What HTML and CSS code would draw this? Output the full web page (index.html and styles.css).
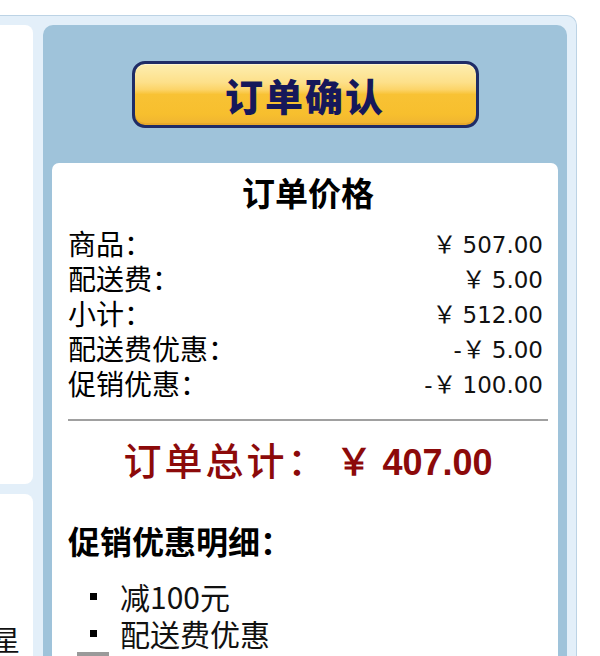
FILE: index.html
```html
<!DOCTYPE html>
<html lang="zh-CN">
<head>
<meta charset="utf-8">
<title>订单确认</title>
<link rel="stylesheet" href="styles.css">
</head>
<body>
<div class="frame">
  <div class="side">
    <div class="side-panel side-top"></div>
    <div class="side-panel side-bottom"><div class="side-char">星</div></div>
  </div>
  <div class="main">
    <button class="confirm" type="button">订单确认</button>
    <div class="card">
      <h2 class="card-title">订单价格</h2>
      <div class="rows">
        <div class="row"><span class="label">商品：</span><span class="price"><span class="yen">￥</span>507.00</span></div>
        <div class="row"><span class="label">配送费：</span><span class="price"><span class="yen">￥</span>5.00</span></div>
        <div class="row"><span class="label">小计：</span><span class="price"><span class="yen">￥</span>512.00</span></div>
        <div class="row"><span class="label">配送费优惠：</span><span class="price">-<span class="yen">￥</span>5.00</span></div>
        <div class="row"><span class="label">促销优惠：</span><span class="price">-<span class="yen">￥</span>100.00</span></div>
      </div>
      <div class="divider"></div>
      <div class="total"><span class="total-label">订单总计：</span><span class="total-num">￥ 407.00</span></div>
      <h3 class="promo-title">促销优惠明细：</h3>
      <ul class="promo-list">
        <li>减100元</li>
        <li>配送费优惠</li>
      </ul>
      <div class="bar"></div>
    </div>
  </div>
</div>
</body>
</html>
```

FILE: styles.css
```css
* { box-sizing: border-box; }
html, body { margin: 0; padding: 0; background: #fff; }
body {
  font-family: "Noto Sans CJK SC", "Noto Sans", sans-serif;
  color: #000;
  overflow: hidden;
  height: 656px;
}
.frame {
  margin-top: 15px;
  width: 577px;
  height: 720px;
  display: flex;
  gap: 10px;
  padding: 9px 9px 0 0;
  background: #e3eff9;
  border-top: 1px solid #bcd3e5;
  border-right: 1px solid #bcd3e5;
  border-top-right-radius: 10px;
}
.side {
  width: 33px;
  flex: none;
  display: flex;
  flex-direction: column;
  gap: 10px;
}
.side-panel {
  background: #fff;
  border-radius: 0 8px 8px 0;
}
.side-top { height: 459px; flex: none; }
.side-bottom {
  flex: 1;
  padding-top: 128px;
  overflow: hidden;
}
.side-char {
  font-size: 28px;
  line-height: 34px;
  margin-left: -8px;
  color: #111;
}
.main {
  flex: 1;
  background: #9fc3da;
  border-radius: 10px 10px 0 0;
  padding: 36px 9px 0;
  display: flex;
  flex-direction: column;
}
.confirm {
  display: block;
  flex: none;
  margin: 0 auto;
  width: 347px;
  height: 67px;
  padding: 0;
  border: 3px solid #1f2c66;
  border-radius: 13px;
  background: linear-gradient(#fdeeb0 0%, #fde08a 30%, #fcd468 42%, #f8c234 50%, #f7bf2e 82%, #efb432 100%);
  box-shadow: inset 0 1px 0 #fff6d0, inset 0 -2px 0 #e7a92a;
  font-family: "Noto Sans CJK SC", sans-serif;
  font-weight: 900;
  font-size: 38px;
  line-height: 58px;
  letter-spacing: 2px;
  color: #16185a;
}
.card {
  margin-top: 35px;
  flex: 1;
  background: #fff;
  border-radius: 7px 7px 0 0;
  padding: 9px 10px 0 16px;
}
.card-title {
  margin: 0 0 14px;
  text-align: center;
  font-size: 33px;
  font-weight: bold;
  line-height: 40px;
}
.rows {
  display: flex;
  flex-direction: column;
}
.row {
  display: flex;
  justify-content: space-between;
  align-items: center;
  height: 35px;
  font-size: 28px;
  line-height: 35px;
}
.label { line-height: 35px; }
.price {
  font-family: "DejaVu Sans", sans-serif;
  font-size: 23px;
  line-height: 35px;
  padding-right: 5px;
  color: #111;
}
.yen {
  font-family: "Noto Sans CJK SC", sans-serif;
  font-size: 24px;
  margin-right: 6px;
}
.divider {
  height: 2px;
  background: #a0a0a0;
  margin-top: 18px;
}
.total {
  margin-top: 16px;
  text-align: center;
  color: #8c0a0a;
  line-height: 44px;
  height: 44px;
}
.total-label {
  font-size: 38px;
  font-weight: 500;
  letter-spacing: 3px;
}
.total-num {
  font-family: "Liberation Sans", sans-serif;
  font-weight: bold;
  font-size: 36px;
  margin-left: 8px;
}
.promo-title {
  margin: 39px 0 0;
  font-size: 32px;
  font-weight: bold;
  line-height: 40px;
}
.promo-list {
  list-style: none;
  margin: 18px 0 0;
  padding: 0 0 0 22px;
  font-size: 30px;
  line-height: 37px;
  color: #111;
}
.promo-list li {
  display: flex;
  align-items: center;
  gap: 23px;
  height: 37px;
}
.promo-list li::before {
  content: "";
  width: 7px;
  height: 7px;
  background: #000;
  flex: none;
}
.bar {
  width: 32px;
  height: 8px;
  margin: 0 0 0 9px;
  background: #9a9a9a;
}
```
